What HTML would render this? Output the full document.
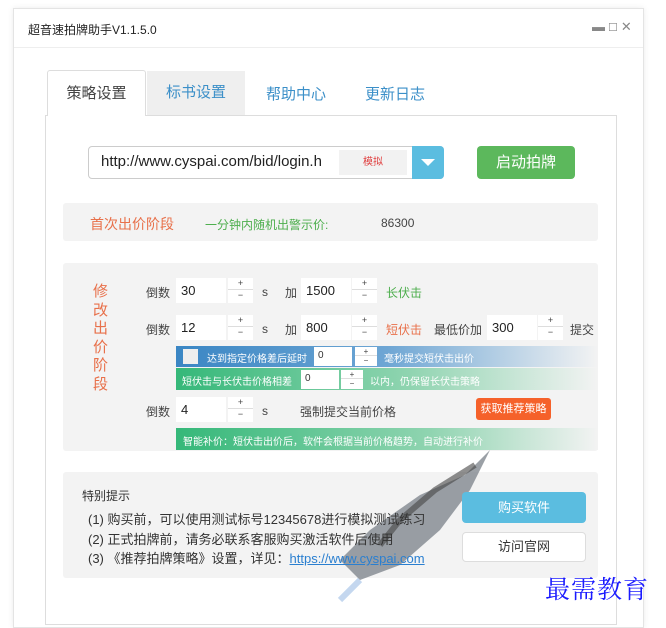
<!DOCTYPE html><html><head><meta charset="utf-8"><style>
*{margin:0;padding:0;box-sizing:border-box}
body{width:666px;height:618px;background:#fff;font-family:"Liberation Sans","Noto Sans CJK SC",sans-serif;position:relative;overflow:hidden;color:#333}
.a{position:absolute}
.win{left:13px;top:8px;width:631px;height:620px;border:1px solid #e4e4e4;box-shadow:0 0 6px rgba(0,0,0,.08)}
.panel{background:#f3f3f3;border-radius:3px}
.in{background:#fff;height:25px;width:50px;font-size:13px;padding:5px 0 0 5px;color:#222}
.sp{background:#fff;width:25px;height:25px;font-size:9px;color:#444;text-align:center;line-height:11px}
.sp div{height:12px;border-bottom:1px solid #ddd}
.t{font-size:12px;color:#444}
.b{font-size:10px;color:#fff;white-space:nowrap}
</style></head><body>
<div class="a win"></div>
<div class="a" style="left:14px;top:47px;width:629px;border-top:1px solid #eee"></div>
<div class="a" style="left:28px;top:21px;font-size:12px;color:#222">超音速拍牌助手V1.1.5.0</div>
<div class="a" style="left:592px;top:19px;font-size:13px;color:#888;letter-spacing:3px">▬<span style="font-size:11px">☐</span>✕</div>
<!-- tabs -->
<div class="a" style="left:45px;top:115px;width:572px;height:510px;border:1px solid #ddd"></div>
<div class="a" style="left:47px;top:70px;width:99px;height:46px;background:#fff;border:1px solid #ddd;border-bottom:none;border-radius:3px 3px 0 0;font-size:15px;color:#444;text-align:center;line-height:46px">策略设置</div>
<div class="a" style="left:147px;top:71px;width:98px;height:44px;background:#efefef;font-size:15px;color:#3b8fc8;text-align:center;line-height:44px">标书设置</div>
<div class="a" style="left:266px;top:83px;font-size:15px;color:#3b8fc8">帮助中心</div>
<div class="a" style="left:365px;top:83px;font-size:15px;color:#3b8fc8">更新日志</div>
<!-- url -->
<div class="a" style="left:88px;top:146px;width:356px;height:33px;border:1px solid #ccc;border-radius:4px;background:#fff"></div>
<div class="a" style="left:101px;top:153px;font-size:15px;color:#222">http://www.cyspai.com/bid/login.h</div>
<div class="a" style="left:339px;top:150px;width:68px;height:25px;background:#f2f2f2;font-size:10px;color:#e04040;text-align:center;line-height:25px">模拟</div>
<div class="a" style="left:412px;top:146px;width:32px;height:33px;background:#5bbde0;border-radius:0 4px 4px 0"></div>
<div class="a" style="left:421px;top:159px;border-left:7px solid transparent;border-right:7px solid transparent;border-top:7px solid #fff"></div>
<div class="a" style="left:477px;top:146px;width:98px;height:33px;background:#5cb85c;border-radius:4px;color:#fff;font-size:15px;text-align:center;line-height:33px">启动拍牌</div>
<!-- first -->
<div class="a panel" style="left:63px;top:203px;width:535px;height:38px"></div>
<div class="a" style="left:90px;top:214px;font-size:14px;color:#e8704a">首次出价阶段</div>
<div class="a" style="left:205px;top:216px;font-size:12px;color:#4cae4c">一分钟内随机出警示价:</div>
<div class="a" style="left:381px;top:216px;font-size:12px;color:#444">86300</div>
<!-- modify -->
<div class="a panel" style="left:63px;top:263px;width:535px;height:188px"></div>
<div class="a" style="left:93px;top:283px;width:16px;font-size:15px;line-height:18.5px;color:#e8704a">修改出价阶段</div>
<div class="a t" style="left:146px;top:284px">倒数</div>
<div class="a in" style="left:176px;top:278px">30</div><div class="a sp" style="left:228px;top:278px"><div>+</div>−</div>
<div class="a t" style="left:262px;top:285px">s</div><div class="a t" style="left:285px;top:284px">加</div>
<div class="a in" style="left:301px;top:278px">1500</div><div class="a sp" style="left:352px;top:278px"><div>+</div>−</div>
<div class="a t" style="left:386px;top:284px;color:#4cae4c">长伏击</div>
<div class="a t" style="left:146px;top:321px">倒数</div>
<div class="a in" style="left:176px;top:315px">12</div><div class="a sp" style="left:228px;top:315px"><div>+</div>−</div>
<div class="a t" style="left:262px;top:322px">s</div><div class="a t" style="left:285px;top:321px">加</div>
<div class="a in" style="left:301px;top:315px">800</div><div class="a sp" style="left:352px;top:315px"><div>+</div>−</div>
<div class="a t" style="left:386px;top:321px;color:#e8704a">短伏击</div>
<div class="a t" style="left:434px;top:321px">最低价加</div>
<div class="a in" style="left:487px;top:315px">300</div><div class="a sp" style="left:538px;top:315px"><div>+</div>−</div>
<div class="a t" style="left:570px;top:321px">提交</div>
<div class="a" style="left:176px;top:346px;width:422px;height:21px;background:linear-gradient(90deg,#3a86c4 0%,#6ea6d4 50%,#f3f3f3 100%)"></div>
<div class="a" style="left:183px;top:349px;width:15px;height:15px;background:#eee"></div>
<div class="a b" style="left:207px;top:350px">达到指定价格差后延时</div>
<div class="a" style="left:314px;top:347px;width:38px;height:19px;background:#fff;font-size:10px;padding:3px 4px">0</div>
<div class="a sp" style="left:355px;top:347px;height:19px;width:22px;font-size:8px;line-height:9px"><div style="height:9px">+</div>−</div>
<div class="a b" style="left:384px;top:350px">毫秒提交短伏击出价</div>
<div class="a" style="left:176px;top:368px;width:422px;height:22px;background:linear-gradient(90deg,#35b879 0%,#8fd4b0 55%,#f3f3f3 100%)"></div>
<div class="a b" style="left:182px;top:373px">短伏击与长伏击价格相差</div>
<div class="a" style="left:301px;top:370px;width:38px;height:19px;background:#fff;font-size:10px;padding:3px 4px">0</div>
<div class="a sp" style="left:341px;top:370px;height:19px;width:22px;font-size:8px;line-height:9px"><div style="height:9px">+</div>−</div>
<div class="a b" style="left:370px;top:373px">以内，仍保留长伏击策略</div>
<div class="a t" style="left:146px;top:403px">倒数</div>
<div class="a in" style="left:176px;top:397px">4</div><div class="a sp" style="left:228px;top:397px"><div>+</div>−</div>
<div class="a t" style="left:262px;top:404px">s</div>
<div class="a t" style="left:300px;top:403px">强制提交当前价格</div>
<div class="a" style="left:476px;top:398px;width:75px;height:22px;background:#f5612a;border-radius:3px;color:#fff;font-size:11px;text-align:center;line-height:22px">获取推荐策略</div>
<div class="a" style="left:176px;top:428px;width:422px;height:22px;background:linear-gradient(90deg,#35b879 0%,#8fd4b0 60%,#f3f3f3 100%)"></div>
<div class="a b" style="left:183px;top:433px">智能补价：短伏击出价后，软件会根据当前价格趋势，自动进行补价</div>
<!-- bottom -->
<div class="a panel" style="left:63px;top:472px;width:535px;height:106px"></div>
<svg class="a" style="left:300px;top:450px" width="200" height="160"><path d="M190 0 L165 25 L120 45 L70 80 L40 110 L60 130 L100 115 L140 80 L170 40 Z" fill="#7a8088" opacity=".75"/><path d="M175 15 L135 40 L100 70 L80 95" stroke="#444" stroke-width="6" fill="none" opacity=".6"/><path d="M60 130 L40 150" stroke="#8ab0e0" stroke-width="6" opacity=".5"/></svg>
<div class="a" style="left:82px;top:487px;font-size:12px;color:#333">特别提示</div>
<div class="a" style="left:88px;top:509px;font-size:13px;color:#333">(1) 购买前，可以使用测试标号12345678进行模拟测试练习</div>
<div class="a" style="left:88px;top:529px;font-size:13px;color:#333">(2) 正式拍牌前，请务必联系客服购买激活软件后使用</div>
<div class="a" style="left:88px;top:548px;font-size:13px;color:#333">(3) 《推荐拍牌策略》设置，详见：<span style="color:#2a7fd0;text-decoration:underline">https://www.cyspai.com</span></div>
<div class="a" style="left:462px;top:492px;width:124px;height:31px;background:#5bbde0;border-radius:4px;color:#fff;font-size:13px;text-align:center;line-height:31px">购买软件</div>
<div class="a" style="left:462px;top:532px;width:124px;height:30px;background:#fff;border:1px solid #ddd;border-radius:4px;color:#333;font-size:13px;text-align:center;line-height:28px">访问官网</div>
<div class="a" style="left:545px;top:570px;font-family:'Noto Serif CJK SC',serif;font-size:25px;color:#1a1aff;letter-spacing:1px">最需教育</div>
</body></html>
